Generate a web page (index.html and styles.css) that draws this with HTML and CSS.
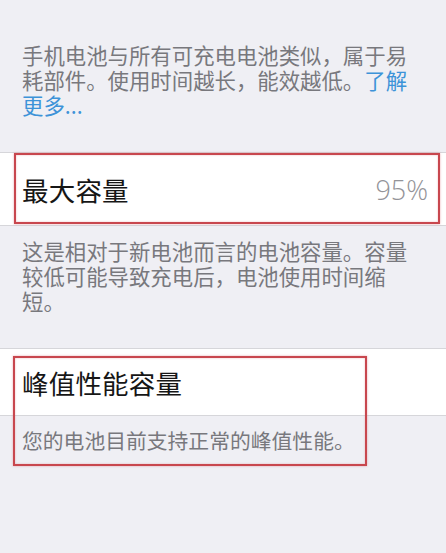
FILE: index.html
```html
<!DOCTYPE html>
<html lang="zh-CN">
<head>
<meta charset="utf-8">
<title>电池健康</title>
<link rel="stylesheet" href="styles.css">
</head>
<body>
<div class="page">
  <p class="note note-top">手机电池与所有可充电电池类似，属于易耗部件。使用时间越长，能效越低。<span class="link">了解</span><br><span class="link">更多...</span></p>

  <div class="row row-max">
    <span class="title">最大容量</span>
    <span class="value">95%</span>
    <div class="mark mark-max"></div>
  </div>

  <p class="note">这是相对于新电池而言的电池容量。容量较低可能导致充电后，电池使用时间缩短。</p>

  <div class="group">
    <div class="row row-peak">
      <span class="title">峰值性能容量</span>
    </div>
    <p class="note note-peak">您的电池目前支持正常的峰值性能。</p>
    <div class="mark mark-peak"></div>
  </div>
</div>
</body>
</html>
```

FILE: styles.css
```css
html, body {
  margin: 0;
  padding: 0;
  background: #efeff4;
}

body {
  width: 446px;
  height: 553px;
  overflow: hidden;
  font-family: "Noto Sans CJK SC", "Noto Sans", sans-serif;
}

.page {
  padding-top: 42px;
}

.note {
  margin: 0;
  padding: 0 29px 0 22px;
  font-size: 21.4px;
  line-height: 25px;
  color: #78787d;
}

.note-top {
  margin-bottom: 35px;
}

.link {
  display: inline-block;
  line-height: 25px;
  vertical-align: top;
  color: #3d93d8;
}

.row {
  position: relative;
  display: flex;
  align-items: center;
  justify-content: space-between;
  background: #ffffff;
  border-top: 1px solid #d6d6da;
  border-bottom: 1px solid #d6d6da;
  padding: 0 18px 0 22px;
  box-sizing: border-box;
}

.row-max {
  height: 74px;
  margin-bottom: 12px;
}

.row-peak {
  height: 68px;
}

.title {
  font-size: 26.5px;
  color: #161616;
  letter-spacing: 0.2px;
}

.value {
  font-size: 27px;
  font-weight: 300;
  color: #939398;
  font-family: "Open Sans", "Noto Sans", "Liberation Sans", sans-serif;
}

.group {
  position: relative;
  margin-top: 35px;
}

.note-peak {
  padding-top: 12px;
  font-size: 20.8px;
}

.mark {
  position: absolute;
  box-sizing: border-box;
  border: 2.5px solid #c8474e;
  box-shadow: 0 0 2px rgba(220, 110, 120, 0.6), inset 0 0 2px rgba(220, 110, 120, 0.5);
  pointer-events: none;
}

.mark-max {
  top: 0;
  left: 14px;
  width: 426px;
  height: 71px;
}

.mark-peak {
  top: 8px;
  left: 13px;
  width: 354px;
  height: 110px;
}
```
